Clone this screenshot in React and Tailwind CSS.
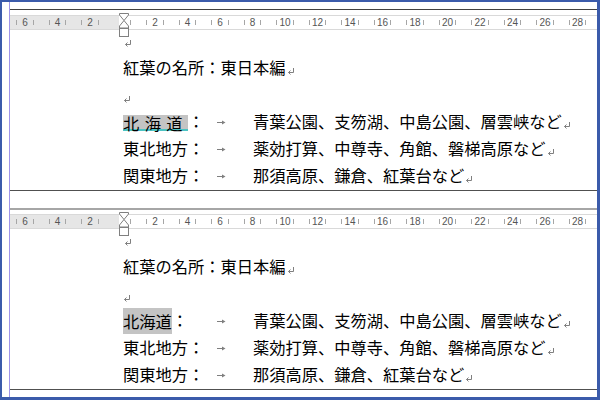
import React from "react";

const Mark = ({ className = "" }) => (
  <svg width="8" height="7" viewBox="0 0 8 7" className={`shrink-0 ${className}`}>
    <path d="M6.5 0 V4.5 H1.5" fill="none" stroke="#7f7f7f" strokeWidth="1" />
    <path d="M3.5 2.5 L1.5 4.5 L3.5 6.5" fill="none" stroke="#7f7f7f" strokeWidth="1" />
  </svg>
);

const TabArrow = () => (
  <svg width="9" height="5" viewBox="0 0 9 5" className="shrink-0 mt-[2px]">
    <path d="M0 2.5 H6" stroke="#7f7f7f" strokeWidth="1" />
    <path d="M5 0.5 L8.5 2.5 L5 4.5 Z" fill="#7f7f7f" />
  </svg>
);

const labels = ["6", "4", "2", null, "2", "4", "6", "8", "10", "12", "14", "16", "18", "20", "22", "24", "26", "28"];

function Ruler() {
  return (
    <div className="relative h-[15px] border-y border-[#d9d9d9] bg-[linear-gradient(to_right,#e6e6e6_109px,#ffffff_109px)]">
      <div className="flex h-full ml-[-1.25px]">
        {labels.map((l, i) => (
          <div key={i} className="w-[32.5px] shrink-0 flex items-center justify-between px-[7.5px]">
            <span className={i === 3 ? "w-px h-[5px] bg-transparent" : "w-px h-[5px] bg-[#a6a6a6]"} />
            <span className="text-[10px] leading-none text-[#555555] font-['Liberation_Sans',Arial,sans-serif]">{l}</span>
            <span className="w-px h-[5px] bg-[#a6a6a6]" />
          </div>
        ))}
      </div>
      <svg className="absolute left-[109px] top-[-3px]" width="10" height="25" viewBox="0 0 10 25">
        <polygon points="0.5,0.5 9.5,0.5 9.5,2 5,7.5 0.5,2" fill="#ffffff" stroke="#808080" strokeWidth="1" />
        <polygon points="5,7.5 9.5,13 9.5,15 0.5,15 0.5,13" fill="#ffffff" stroke="#808080" strokeWidth="1" />
        <rect x="0.5" y="15.5" width="9" height="8" fill="#ffffff" stroke="#808080" strokeWidth="1" />
      </svg>
    </div>
  );
}

function Row({ label, text }) {
  return (
    <div className="flex items-center h-[27px] pl-[113px]">
      <div className="w-[94px] shrink-0 flex items-center">{label}</div>
      <div className="w-[36px] shrink-0 flex items-center">
        <TabArrow />
      </div>
      <span className="whitespace-nowrap">{text}</span>
      <Mark className="mt-[8px] ml-[1px]" />
    </div>
  );
}

function Section({ first }) {
  const hokkaido = first ? (
    <span className="inline-block h-[16px] leading-[16px] mt-[3px] bg-[#c4c4c4] tracking-[5.42px] shadow-[inset_0_-2px_0_#4cc3c3]">
      北海道
    </span>
  ) : (
    <span className="inline-block h-[26px] leading-[26px] bg-[#c4c4c4]">北海道</span>
  );
  return (
    <div className="flex flex-col">
      {first ? (
        <>
          <div className="h-[7px]" />
          <div className="h-px bg-[#404040]" />
          <div className="h-[5px]" />
        </>
      ) : (
        <>
          <div className="h-[17px]" />
          <div className="h-[2px] bg-[#a6a6a6]" />
          <div className="h-[4px]" />
        </>
      )}
      <Ruler />
      <div className="h-[160px] overflow-hidden text-[16.25px] leading-[27px] text-black font-['Noto_Sans_CJK_JP','Noto_Sans_CJK_SC',sans-serif]">
        <div className="h-[24px] pl-[114px] pt-[10px]">
          <Mark className="block" />
        </div>
        <div className="flex items-center h-[27px] pl-[113px]">
          <span className="whitespace-nowrap">紅葉の名所：東日本編</span>
          <Mark className="mt-[8px] ml-[1px]" />
        </div>
        <div className="flex items-center h-[27px] pl-[113px]">
          <Mark className="mt-[9px]" />
        </div>
        <Row
          label={
            <>
              {hokkaido}
              <span>：</span>
            </>
          }
          text="青葉公園、支笏湖、中島公園、層雲峡など"
        />
        <Row label={<span>東北地方：</span>} text="薬効打算、中尊寺、角館、磐梯高原など" />
        <Row label={<span>関東地方：</span>} text="那須高原、鎌倉、紅葉台など" />
      </div>
      <div className="h-px bg-[#505050]" />
    </div>
  );
}

export default function App() {
  return (
    <div className="w-[600px] h-[400px] bg-white overflow-hidden border-t-2 border-l-2 border-r-[3px] border-b-[3px] border-[#3b5bab] flex">
      <div className="w-[7px] shrink-0" />
      <div className="w-px shrink-0 bg-[#a094e8]" />
      <div className="flex-1 min-w-0 flex flex-col">
        <Section first />
        <Section first={false} />
      </div>
    </div>
  );
}
